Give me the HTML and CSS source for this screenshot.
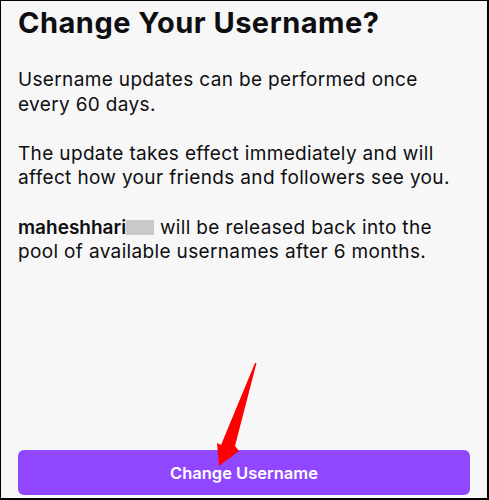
FILE: index.html
```html
<!DOCTYPE html>
<html lang="en">
<head>
    <meta charset="UTF-8">
    <title>Change Your Username?</title>
    <link rel="stylesheet" href="styles.css">
</head>
<body>
<div class="dialog">
    <h1 class="title">Change Your Username?</h1>
    <div class="content">
        <p>Username updates can be performed once every 60 days.</p>
        <p>The update takes effect immediately and will affect how your friends and followers see you.</p>
        <p><strong class="name">maheshhari</strong> will be released back into the pool of available usernames after 6 months.</p>
    </div>
    <button class="submit">Change Username</button>
    <!-- annotation arrow -->
    <svg class="arrow" width="489" height="500" viewBox="0 0 489 500">
        <polygon points="256.5,363 235,446 239,451 219,466 217,443 221,445 255,363" fill="#ff0000"/>
    </svg>
</div>
</body>
</html>
```

FILE: styles.css
```css
* {
    margin: 0;
    padding: 0;
    box-sizing: border-box;
}

body {
    font-family: Inter, "Noto Sans", sans-serif;
    color: #0e0e10;
}

.dialog {
    position: relative;
    display: flex;
    flex-direction: column;
    width: 489px;
    height: 500px;
    padding: 4px 17px 3px 17px;
    background-color: #f7f7f8;
    border: 1px solid #000;
    border-right-width: 2px;
    border-bottom-width: 2px;
}

.title {
    font-size: 29px;
    font-weight: 700;
    line-height: 36px;
    letter-spacing: 0.5px;
}

.content {
    margin-top: 27px;
    font-size: 19px;
    line-height: 24.6px;
    letter-spacing: 0.35px;
}

.content p {
    margin-bottom: 24.6px;
}

/* blurred tail of the username */
.name {
    font-weight: 600;
    letter-spacing: 0;
    padding-right: 28px;
    background: linear-gradient(#c9c9cb, #c9c9cb) right 55% / 28px 15px no-repeat;
}

.submit {
    margin-top: auto;
    height: 45px;
    border: none;
    border-radius: 6px;
    background-color: #9147ff;
    color: #fff;
    font-family: Inter, "Noto Sans", sans-serif;
    font-size: 16.5px;
    font-weight: 600;
}

.arrow {
    position: absolute;
    top: -1px;
    left: -1px;
}
```
